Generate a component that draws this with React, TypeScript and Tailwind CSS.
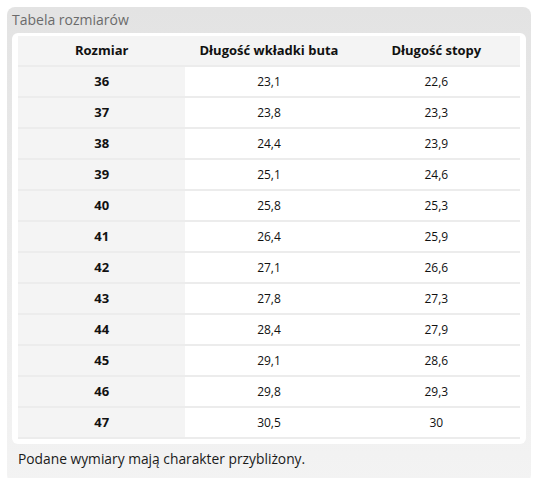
const ROWS: [string, string, string][] = [
  ["36", "23,1", "22,6"],
  ["37", "23,8", "23,3"],
  ["38", "24,4", "23,9"],
  ["39", "25,1", "24,6"],
  ["40", "25,8", "25,3"],
  ["41", "26,4", "25,9"],
  ["42", "27,1", "26,6"],
  ["43", "27,8", "27,3"],
  ["44", "28,4", "27,9"],
  ["45", "29,1", "28,6"],
  ["46", "29,8", "29,3"],
  ["47", "30,5", "30"],
];

export default function App() {
  return (
    <div className="min-h-[478px] bg-white p-[7px] pr-[3px] pb-[2px] font-['Open_Sans',sans-serif]">
      <div className="flex flex-col rounded-[8px] bg-gradient-to-b from-[#e3e3e3] to-[#f3f3f3] px-[5px] pb-[15px] pt-[5px]">
        <h2 className="mb-[5px] text-[14px] leading-[16px] text-[#6b6b6b]">
          Tabela rozmiarów
        </h2>

        <div className="rounded-[6px] bg-white px-[6px] pb-[5px] pt-[3px]">
          <table className="w-full table-fixed border-collapse text-[13px] text-[#111]">
            <thead>
              <tr className="h-[30px] border-b-2 border-[#ececec] bg-[#f4f4f4]">
                <th className="font-bold">Rozmiar</th>
                <th className="font-bold">Długość wkładki buta</th>
                <th className="font-bold">Długość stopy</th>
              </tr>
            </thead>
            <tbody>
              {ROWS.map(([size, insole, foot]) => (
                <tr key={size} className="h-[31px] border-b-2 border-[#ececec]">
                  <td className="bg-[#f4f4f4] text-center font-bold">{size}</td>
                  <td className="text-center text-[12px]">{insole}</td>
                  <td className="text-center text-[12px]">{foot}</td>
                </tr>
              ))}
            </tbody>
          </table>
        </div>

        <p className="mt-[6px] pl-[6px] text-[13.8px] leading-[18px] text-[#1a1a1a]">
          Podane wymiary mają charakter przybliżony.
        </p>
      </div>
    </div>
  );
}
